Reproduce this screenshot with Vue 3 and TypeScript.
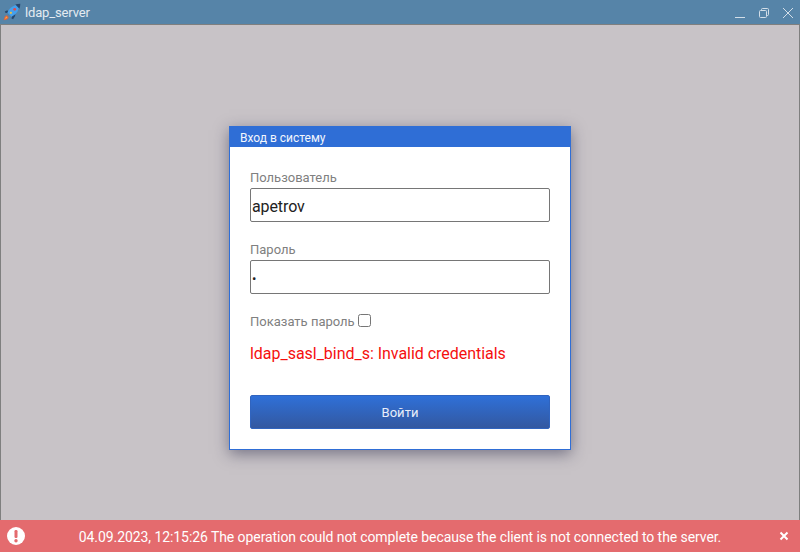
<script setup lang="ts">
const title = 'ldap_server'
const message = '04.09.2023, 12:15:26 The operation could not complete because the client is not connected to the server.'
</script>

<template>
  <div class="window">
    <header class="titlebar">
      <svg class="logo" width="18" height="18" viewBox="0 0 18 18">
        <path d="M4.300 7.200 1.800 8.400l.8 1.500 3.600-.2zM9.200 12.200l-.7 3.200 1.600.9 2-3.200.2-2.600z" fill="#26476e" />
        <path d="M3.800 12.300c-1.600.6-2.600 2-3 4.900 2.900-.4 4.300-1.400 4.900-3z" fill="#e8623a" />
        <path d="M3.400 13.600c-.7.400-1.100 1.200-1.300 2.300 1.100-.2 1.900-.6 2.300-1.300z" fill="#f5b342" />
        <path d="M15.200 1.800C11 2.300 8 4 6 6.700L4.300 9.400l4.300 4.300 2.700-1.700c2.700-2 4.400-5 4.900-9.200z" fill="#45a0ec" />
        <path d="M17.300 .7c-1.900 0-3.500.3-5 .9l4.100 4.100c.6-1.500.9-3.100.9-5z" fill="#26476e" />
        <circle cx="11.700" cy="6.300" r="1.400" fill="#e24a4a" />
        <circle cx="7.900" cy="9.800" r="1.100" fill="#f0c040" />
      </svg>
      <span class="app-name">{{ title }}</span>
      <div class="controls">
        <svg width="12" height="12" viewBox="0 0 12 12" fill="none" stroke="#d3dee8"><path d="M1 10.500h10" /></svg>
        <svg width="12" height="12" viewBox="0 0 12 12" fill="none" stroke="#d3dee8">
          <rect x="1.500" y="3.500" width="7" height="7" rx="1" />
          <path d="M3.500 3.500v-1a1 1 0 0 1 1-1h5a1 1 0 0 1 1 1v5a1 1 0 0 1-1 1h-1" />
        </svg>
        <svg width="12" height="12" viewBox="0 0 12 12" fill="none" stroke="#d3dee8"><path d="m1 1 10 10M11 1 1 11" /></svg>
      </div>
    </header>

    <main class="content">
      <section class="card">
        <h2 class="card-title">Вход в систему</h2>
        <form class="card-body" @submit.prevent>
          <label class="field">
            <span class="label">Пользователь</span>
            <input class="input" type="text" value="apetrov" />
          </label>
          <label class="field">
            <span class="label">Пароль</span>
            <input class="input password" type="password" value="1" />
          </label>
          <label class="show">
            <span class="label-inline">Показать пароль</span>
            <input class="check" type="checkbox" />
          </label>
          <p class="error">ldap_sasl_bind_s: Invalid credentials</p>
          <button class="submit" type="submit">Войти</button>
        </form>
      </section>
    </main>

    <div class="toast">
      <svg class="toast-icon" width="20" height="20" viewBox="0 0 20 20">
        <circle cx="10" cy="10" r="9" fill="#fff" />
        <rect x="8.500" y="4" width="3" height="8" rx="1.200" fill="#e46b6e" />
        <circle cx="10" cy="14.700" r="1.700" fill="#e46b6e" />
      </svg>
      <span class="toast-text">{{ message }}</span>
      <svg class="toast-close" width="10" height="10" viewBox="0 0 10 10" fill="none" stroke="#fff" stroke-width="2"><path d="m1.500 1.500 7 7M8.500 1.500l-7 7" /></svg>
    </div>
  </div>
</template>

<style>
html, body { margin: 0; padding: 0; }
</style>

<style scoped>
.window {
  position: relative;
  width: 800px;
  height: 552px;
  display: flex;
  flex-direction: column;
  overflow: hidden;
  font-family: Roboto, "Liberation Sans", sans-serif;
  background: #c8c3c7;
}
.titlebar {
  height: 24px;
  flex: none;
  display: flex;
  align-items: center;
  padding-left: 3px;
  background: #5684a8;
  border-bottom: 1px solid #7f7f7f;
}
.logo { flex: none; }
.app-name {
  margin-left: 4px;
  font-size: 13px;
  letter-spacing: -0.15px;
  color: #e4ebf1;
}
.controls {
  margin-left: auto;
  display: flex;
  gap: 12px;
  padding-right: 6px;
  margin-top: 1px;
}
.content {
  flex: 1;
  display: flex;
  align-items: center;
  justify-content: center;
  padding-bottom: 1px;
  border-left: 1px solid #7f7f7f;
  border-right: 1px solid #7f7f7f;
}
.card {
  box-sizing: border-box;
  width: 342px;
  height: 324px;
  background: #fff;
  border: 1px solid #2f6ed6;
  box-shadow: 0 4px 14px rgba(40, 40, 70, 0.5);
}
.card-title {
  margin: 0;
  height: 20px;
  padding-left: 10px;
  font-size: 12px;
  font-weight: 400;
  line-height: 22px;
  color: #f2f6fd;
  background: #2f6ed6;
}
.card-body {
  display: flex;
  flex-direction: column;
  padding: 22px 20px 0;
}
.field {
  display: flex;
  flex-direction: column;
  margin-bottom: 19px;
}
.label {
  height: 19px;
  font-size: 13px;
  line-height: 18px;
  color: #808080;
}
.input {
  box-sizing: border-box;
  width: 300px;
  height: 34px;
  margin: 0;
  padding: 2px 1px 0;
  border: 1px solid #767676;
  border-radius: 2px;
  outline: none;
  background: #fff;
  font-family: Roboto, "Liberation Sans", sans-serif;
  font-size: 16px;
  letter-spacing: -0.1px;
  color: #222;
}
.password { font-size: 13px; }
.show {
  display: flex;
  align-items: center;
  height: 18px;
  margin-top: -1px;
}
.label-inline {
  font-size: 13px;
  color: #808080;
}
.check {
  width: 13px;
  height: 13px;
  margin: 0 0 1px 3px;
}
.error {
  margin: 13px 0 0;
  height: 22px;
  font-size: 16px;
  line-height: 22px;
  letter-spacing: -0.03px;
  color: #f50f0f;
}
.submit {
  height: 34px;
  margin-top: 30px;
  border: 1px solid #3064bf;
  border-radius: 2px;
  background: linear-gradient(#2f70d8, #3358a0);
  font-family: Roboto, "Liberation Sans", sans-serif;
  font-size: 13px;
  color: #e8eefa;
}
.toast {
  position: absolute;
  left: 0;
  right: 0;
  bottom: 0;
  height: 32px;
  display: flex;
  align-items: center;
  background: #e46b6e;
  color: #fff;
}
.toast-icon {
  position: absolute;
  left: 6px;
  top: 6px;
}
.toast-text {
  flex: 1;
  text-align: center;
  font-size: 14px;
  letter-spacing: -0.075px;
  padding-top: 1px;
}
.toast-close {
  position: absolute;
  right: 11px;
  top: 11px;
}
</style>
